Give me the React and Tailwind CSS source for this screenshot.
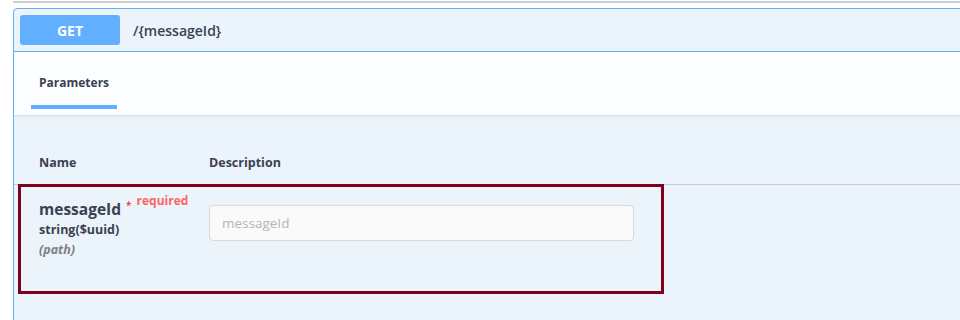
export default function App() {
  const font = { fontFamily: '"Open Sans", "Liberation Sans", sans-serif' };
  return (
    <div className="w-[960px] h-[320px] bg-white overflow-hidden text-[#3b4151]" style={font}>
      <div className="mt-px ml-[13px] h-[2px] bg-[#cfcfcf]" />
      <div className="mt-[5px] ml-[13px] w-[1000px] h-[400px] border border-[#61affe] rounded-[4px] bg-[#ebf3fb]">
        <div className="h-[43px] flex items-center px-[6px] border-b border-[#61affe]">
          <div className="w-[100px] h-[30px] rounded-[3px] bg-[#61affe] text-white text-[14px] font-bold flex items-center justify-center">
            GET
          </div>
          <div className="ml-[13px] text-[14px] font-semibold text-[#3b4151]">/{"{"}messageId{"}"}</div>
        </div>
        <div className="h-[63px] bg-[#fdfeff] shadow-[0_1px_2px_rgba(0,0,0,0.12)] flex items-end pl-[17px]">
          <div className="flex flex-col">
            <div className="px-[8px] text-[12px] font-bold text-[#3b4151] leading-none">Parameters</div>
            <div className="mt-[16px] mb-[6px] h-[4px] bg-[#61affe]" />
          </div>
        </div>
        <div className="pt-[39px]">
          <div className="flex h-[31px] items-start pl-[25px] text-[12.5px] font-bold text-[#3b4151] border-b border-[#c5cad3]">
            <div className="w-[170px]">Name</div>
            <div>Description</div>
          </div>
          <div className="-mt-px ml-[4px] w-[646px] h-[110px] border-[3px] border-[#80001c] flex pl-[18px]">
            <div className="w-[170px] pt-[10px]">
              <div className="flex items-start">
                <span className="text-[15.5px] font-bold text-[#3b4151] leading-[20px] mt-[2px]">messageId</span>
                <span className="text-[#ff0000] text-[10px] ml-[5px] mt-[3px] leading-none">*</span>
                <span className="text-[12px] font-bold text-[#ff6464] ml-[5px] -mt-[4px] leading-[16px]">required</span>
              </div>
              <div className="text-[12.5px] font-bold text-[#3b4151] mt-[3px] leading-[16px]">string($uuid)</div>
              <div className="text-[12.5px] font-bold italic text-[#808080] mt-[4px] leading-[16px]">(path)</div>
            </div>
            <div className="pt-[18px]">
              <div className="w-[425px] h-[36px] rounded-[4px] border border-[#d9d9d9] bg-[#fafafa] flex items-center pl-[12px] text-[13.5px] text-[#b5b5b5]">
                messageId
              </div>
            </div>
          </div>
        </div>
      </div>
    </div>
  );
}
